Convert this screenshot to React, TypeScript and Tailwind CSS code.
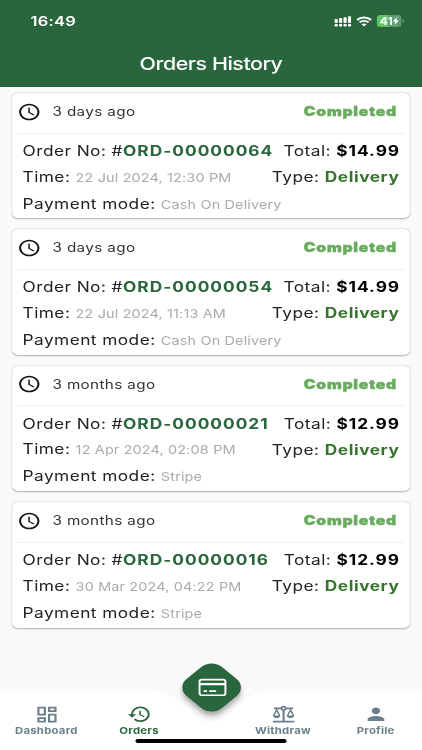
import type { ReactNode } from "react";
import {
  MdHistory,
  MdOutlineBalance,
  MdOutlineDashboard,
  MdPerson,
  MdSchedule,
} from "react-icons/md";

type Order = {
  age: string;
  number: string;
  total: string;
  time: string;
  type: string;
  payment: string;
};

const ORDERS: Order[] = [
  {
    age: "3 days ago",
    number: "ORD-00000064",
    total: "$14.99",
    time: "22 Jul 2024, 12:30 PM",
    type: "Delivery",
    payment: "Cash On Delivery",
  },
  {
    age: "3 days ago",
    number: "ORD-00000054",
    total: "$14.99",
    time: "22 Jul 2024, 11:13 AM",
    type: "Delivery",
    payment: "Cash On Delivery",
  },
  {
    age: "3 months ago",
    number: "ORD-00000021",
    total: "$12.99",
    time: "12 Apr 2024, 02:08 PM",
    type: "Delivery",
    payment: "Stripe",
  },
  {
    age: "3 months ago",
    number: "ORD-00000016",
    total: "$12.99",
    time: "30 Mar 2024, 04:22 PM",
    type: "Delivery",
    payment: "Stripe",
  },
];

// Dual-SIM signal: four rising bars over a row of dots.
function SignalIcon() {
  return (
    <svg className="h-[11px] w-[14.5px]" viewBox="0 0 15 11" fill="white">
      {[0, 1, 2, 3].map((bar) => (
        <g key={bar}>
          <rect x={0.3 + bar * 3.8} y={3 - bar} width="2.7" height={4 + bar} rx="0.8" />
          <rect x={0.3 + bar * 3.8} y="8.1" width="2.7" height="2.6" rx="0.8" />
        </g>
      ))}
    </svg>
  );
}

function WifiIcon() {
  return (
    <svg className="h-[11px] w-[13px]" viewBox="0 0 14 11" preserveAspectRatio="none" fill="none" stroke="white">
      <path d="M0.8 4C4.2 0.6 9.8 0.6 13.2 4" strokeWidth="1.9" />
      <path d="M3 6.4C5.2 4.3 8.8 4.3 11 6.4" strokeWidth="1.9" />
      <path d="M4.7 8.3C6.1 7.1 7.9 7.1 9.3 8.3L7 10.6Z" fill="white" stroke="none" />
    </svg>
  );
}

function StatusBar() {
  return (
    <div className="flex h-[42px] items-center justify-between pr-[14.8px] pl-[25px]">
      <span className="text-[13.5px] font-semibold tracking-[0.2px] text-white">16:49</span>
      <div className="flex items-center">
        <SignalIcon />
        <span className="w-[4px]" />
        <WifiIcon />
        <span className="w-[4px]" />
        <div className="flex h-[12px] w-[20px] items-center justify-center rounded-[3px] bg-linear-to-r from-[#63c466] from-45% to-[#639b75] to-45%">
          <span className="text-[10px] leading-none font-bold text-white">41</span>
          <svg className="h-[8px] w-[5px]" viewBox="0 0 5 8" fill="white">
            <path d="M3.4 0L0 4.6H2.1L1.5 8L5 3.3H2.9Z" />
          </svg>
        </div>
        <span className="ml-[1px] h-[4px] w-[1px] rounded-r-sm bg-[#639b75]" />
      </div>
    </div>
  );
}

function OrderCard({ order }: { order: Order }) {
  return (
    <article className="h-[125.4px] rounded-[5px] bg-white shadow-[0_0.6px_1.5px_rgba(0,0,0,0.3)]">
      <div className="mr-[4px] ml-[5px] flex h-[40.5px] items-center border-b border-[#efefef] pb-[2px]">
        <MdSchedule className="-mt-[0.5px] -ml-[1px] size-[20px] text-[#161616]" />
        <span className="mt-[1px] ml-[9px] text-[12.5px] tracking-[0.3px] text-[#333]">
          {order.age}
        </span>
        <span className="mr-[6.5px] ml-auto text-[12.9px] font-black tracking-[0.6px] text-[#6aac5e] [-webkit-text-stroke:0.4px_#6aac5e]">
          Completed
        </span>
      </div>
      <div className="flex flex-col pr-[8.5px] pl-[8.5px] text-[14.2px] tracking-[0.35px] whitespace-nowrap text-[#222]">
        <div className="flex h-[34px] items-center justify-between">
          <span>
            Order No: #
            <b className="font-bold tracking-[0.82px] text-[#2a663d]">{order.number}</b>
          </span>
          <span>
            Total: <b className="-mr-[0.5px] font-bold tracking-[0.8px] text-black">{order.total}</b>
          </span>
        </div>
        <div className="flex h-[18px] items-center justify-between">
          <span>
            Time:{" "}
            <span className="text-[11.8px] tracking-[0.14px] text-[#aaa]">{order.time}</span>
          </span>
          <span>
            Type: <b className="font-bold tracking-[0.45px] text-[#34752b]">{order.type}</b>
          </span>
        </div>
        <div className="flex h-[36px] items-center">
          <span>
            Payment mode:{" "}
            <span className="text-[11.8px] tracking-[0.14px] text-[#aaa]">{order.payment}</span>
          </span>
        </div>
      </div>
    </article>
  );
}

function NavItem({
  icon,
  label,
  active = false,
}: {
  icon: ReactNode;
  label: string;
  active?: boolean;
}) {
  return (
    <div
      className={`flex w-[76px] flex-col items-center pt-[13px] ${
        active ? "text-[#2a663d]" : "text-[#6b7f8a]"
      }`}
    >
      <span className="flex h-[21px] items-center">{icon}</span>
      <span className="text-[9.3px] leading-[11px] font-bold tracking-[0.2px]">{label}</span>
    </div>
  );
}

function BottomNav() {
  return (
    <nav className="relative h-[59px]">
      {/* white bar with the notch cut out around the button */}
      <svg
        className="absolute inset-0 h-[59px] w-[346px] drop-shadow-[0_-1px_2px_rgba(0,0,0,0.01)]"
        viewBox="0 0 346 59"
        fill="white"
      >
        <path d="M0 0H128Q137 0 143 7L161 26Q173 37 185 26L203 7Q209 0 218 0H346V59H0Z" />
      </svg>
      <div className="relative flex justify-between">
        <div className="flex">
          <NavItem icon={<MdOutlineDashboard className="size-[21px]" />} label="Dashboard" />
          <NavItem icon={<MdHistory className="size-[20.5px]" />} label="Orders" active />
        </div>
        <div className="flex">
          <NavItem icon={<MdOutlineBalance className="size-[21px]" />} label="Withdraw" />
          <NavItem icon={<MdPerson className="size-[20.5px]" />} label="Profile" />
        </div>
      </div>
      <button
        type="button"
        aria-label="Card"
        className="absolute top-[-24.5px] left-[152.7px] size-[41px] rotate-45 rounded-[12px] bg-[#2a663d] shadow-[3px_3px_5px_rgba(0,0,0,0.32)]"
      >
        <svg
          className="absolute top-[10px] left-[9.2px] h-[20px] w-[24px] -rotate-45"
          viewBox="0 0 24 20"
          fill="none"
          stroke="white"
        >
          <rect x="1.4" y="2.1" width="21.2" height="15.6" rx="2" strokeWidth="1.6" />
          <path d="M1.5 6.6H22.5" strokeWidth="2.4" />
          <path d="M4.8 13.6H7.5M9.3 13.6H15" strokeWidth="1.6" />
        </svg>
      </button>
      <div className="absolute top-[48px] left-[111px] h-[4px] w-[124px] rounded-full bg-black" />
    </nav>
  );
}

export default function App() {
  return (
    <div className="h-[750px] w-[422px] overflow-hidden">
      {/* the interface is laid out narrow and widened to fill the frame */}
      <div className="flex h-[750px] w-[346px] origin-top-left scale-x-[1.2197] flex-col bg-[#fafafa] font-['Inter','Liberation_Sans',sans-serif]">
        <header className="h-[87px] bg-[#2a663d]">
          <StatusBar />
          <h1 className="mt-[9px] text-center text-[17.6px] leading-[26px] font-medium tracking-[-0.4px] text-white">
            Orders History
          </h1>
        </header>
        <main className="flex flex-1 flex-col gap-[11px] px-[10px] pt-[6px]">
          {ORDERS.map((order) => (
            <OrderCard key={order.number} order={order} />
          ))}
        </main>
        <BottomNav />
      </div>
    </div>
  );
}
